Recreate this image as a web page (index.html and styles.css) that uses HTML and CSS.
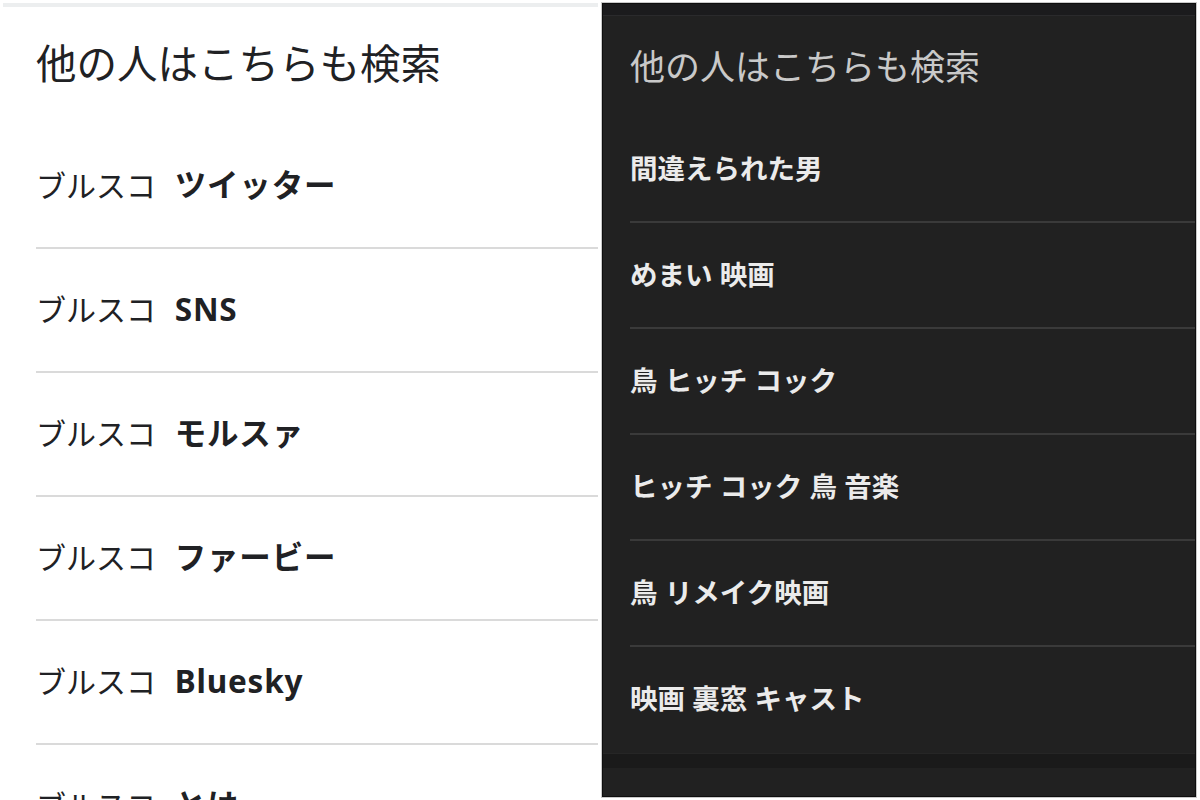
FILE: index.html
```html
<!DOCTYPE html>
<html lang="ja">
<head>
<meta charset="utf-8">
<title>他の人はこちらも検索</title>
<link rel="stylesheet" href="styles.css">
</head>
<body>
<div class="page">
  <section class="light">
    <div class="topbar"></div>
    <h2 class="light-title">他の人はこちらも検索</h2>
    <ul class="light-list">
      <li>ブルスコ <b>ツイッター</b></li>
      <li>ブルスコ <b>SNS</b></li>
      <li>ブルスコ <b>モルスァ</b></li>
      <li>ブルスコ <b>ファービー</b></li>
      <li>ブルスコ <b>Bluesky</b></li>
      <li>ブルスコ <b>とは</b></li>
    </ul>
  </section>
  <section class="dark">
    <div class="dark-band"></div>
    <h2 class="dark-title">他の人はこちらも検索</h2>
    <ul class="dark-list">
      <li>間違えられた男</li>
      <li>めまい 映画</li>
      <li>鳥 ヒッチ コック</li>
      <li>ヒッチ コック 鳥 音楽</li>
      <li>鳥 リメイク映画</li>
      <li>映画 裏窓 キャスト</li>
    </ul>
    <div class="dark-footer"></div>
  </section>
</div>
</body>
</html>
```

FILE: styles.css
```css
html, body {
  margin: 0;
  padding: 0;
  background: #ffffff;
  overflow: hidden;
}
body {
  font-family: "Noto Sans CJK JP", sans-serif;
}
.page {
  display: flex;
  height: 800px;
  overflow: hidden;
}
.light {
  width: 602px;
  flex: none;
  padding: 3px 4px 0 0;
  box-sizing: border-box;
}
.topbar {
  height: 4px;
  margin-left: 3px;
  background: #eceeef;
}
.light-title {
  margin: 0 0 4px 0;
  height: 114px;
  line-height: 110px;
  padding-left: 36px;
  box-sizing: border-box;
  font-size: 40.5px;
  font-weight: 400;
  color: #202124;
}
.light-list {
  list-style: none;
  margin: 0;
  padding: 0 0 0 36px;
}
.light-list li {
  height: 122px;
  line-height: 118px;
  border-bottom: 2px solid #dadada;
  font-size: 30px;
  color: #202124;
  white-space: nowrap;
  word-spacing: 12px;
}
.light-list b {
  font-family: "Noto Sans", "Noto Sans CJK JP", sans-serif;
  font-weight: 700;
  font-size: 31.5px;
  letter-spacing: 0.8px;
}
.dark {
  width: 594px;
  height: 794px;
  margin-top: 3px;
  flex: none;
  background: #212121;
  border: 1px solid #0e0e0e;
  box-shadow: 0 0 0 1px #c9c9c9;
  box-sizing: border-box;
  display: flex;
  flex-direction: column;
  overflow: hidden;
}
.dark-band {
  height: 11px;
  background: #1b1b1d;
  border-bottom: 1px solid #2a2a2c;
  flex: none;
}
.dark-title {
  margin: 0;
  height: 101px;
  line-height: 98px;
  padding-left: 27px;
  font-size: 35px;
  font-weight: 400;
  color: #c9c9c9;
  flex: none;
}
.dark-list {
  list-style: none;
  margin: 0;
  padding: 0 0 0 27px;
  flex: none;
}
.dark-list li {
  height: 104px;
  line-height: 100px;
  border-bottom: 2px solid #3a3a3a;
  font-size: 27.5px;
  font-weight: 700;
  color: #ebebeb;
  white-space: nowrap;
  word-spacing: 1px;
}
.dark-list li:last-child {
  border-bottom: none;
}
.dark-footer {
  height: 14px;
  margin-top: 2px;
  background: #1a1a1a;
  border-top: 1px solid #262626;
  flex: none;
}
```
